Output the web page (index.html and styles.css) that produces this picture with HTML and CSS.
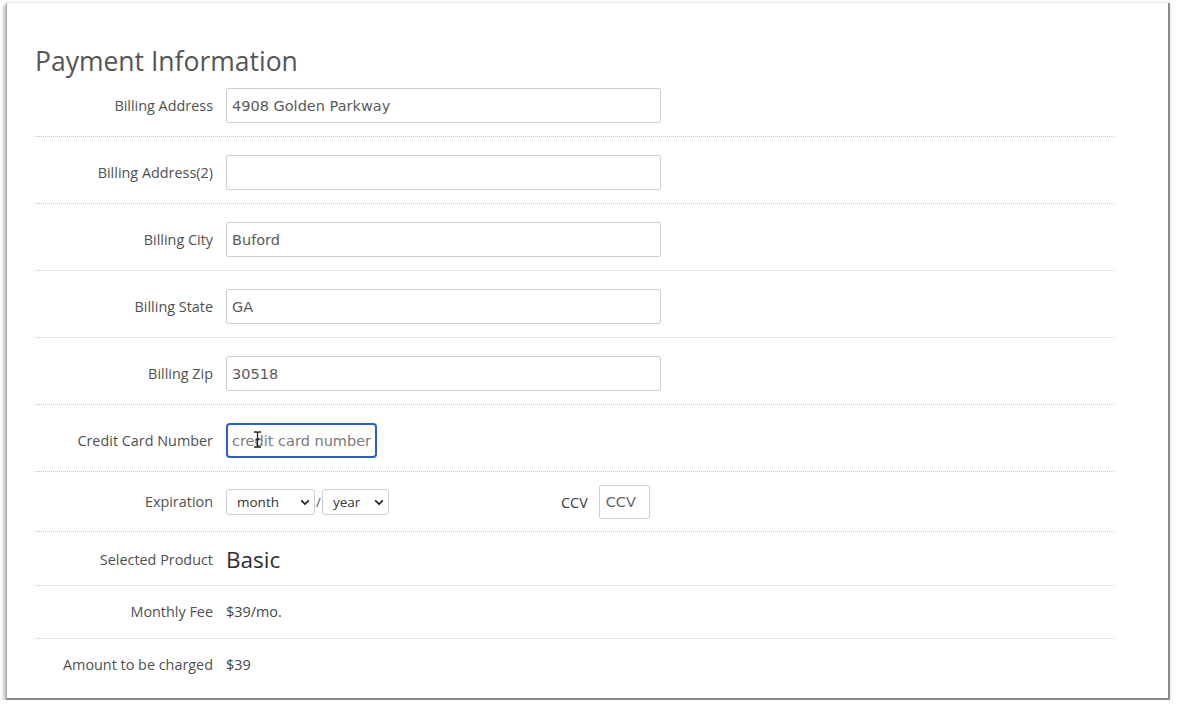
FILE: index.html
```html
<!DOCTYPE html>
<html lang="en">
<head>
<meta charset="utf-8">
<title>Payment Information</title>
<link rel="stylesheet" href="styles.css">
</head>
<body>
<div class="card">
  <h1 class="title">Payment Information</h1>
  <div class="form">
    <div class="row row-first">
      <label class="lbl">Billing Address</label>
      <div class="val"><input class="txt" type="text" value="4908 Golden Parkway"></div>
    </div>
    <div class="row">
      <label class="lbl">Billing Address(2)</label>
      <div class="val"><input class="txt" type="text" value=""></div>
    </div>
    <div class="row">
      <label class="lbl">Billing City</label>
      <div class="val"><input class="txt" type="text" value="Buford"></div>
    </div>
    <div class="row">
      <label class="lbl">Billing State</label>
      <div class="val"><input class="txt" type="text" value="GA"></div>
    </div>
    <div class="row">
      <label class="lbl">Billing Zip</label>
      <div class="val"><input class="txt" type="text" value="30518"></div>
    </div>
    <div class="row">
      <label class="lbl">Credit Card Number</label>
      <div class="val">
        <span class="cc-wrap">
          <input class="txt cc" type="text" placeholder="credit card number">
          <svg class="ibeam" width="9" height="17" viewBox="0 0 9 17" aria-hidden="true">
            <path d="M1 1h2.5c.6 0 1 .4 1 1M8 1H5.5c-.6 0-1 .4-1 1v13c0 .6-.4 1-1 1H1M8 16H5.5c-.6 0-1-.4-1-1M2.5 8.5h4" fill="none" stroke="#222" stroke-width="1.3"/>
          </svg>
        </span>
      </div>
    </div>
    <div class="row row-exp">
      <label class="lbl">Expiration</label>
      <div class="val exp">
        <span class="sel-wrap">
          <select class="sel sel-month"><option>month</option></select>
          <svg class="chev" width="10" height="7" viewBox="0 0 10 7" aria-hidden="true"><path d="M1.2 1.3L5 5.1l3.8-3.8" fill="none" stroke="#222" stroke-width="1.7"/></svg>
        </span>
        <span class="slash">/</span>
        <span class="sel-wrap">
          <select class="sel sel-year"><option>year</option></select>
          <svg class="chev" width="10" height="7" viewBox="0 0 10 7" aria-hidden="true"><path d="M1.2 1.3L5 5.1l3.8-3.8" fill="none" stroke="#222" stroke-width="1.7"/></svg>
        </span>
        <span class="ccv-lbl">CCV</span>
        <input class="txt ccv" type="text" placeholder="CCV">
      </div>
    </div>
    <div class="row row-product">
      <label class="lbl">Selected Product</label>
      <div class="val product">Basic</div>
    </div>
    <div class="row row-text">
      <label class="lbl">Monthly Fee</label>
      <div class="val plain">$39/mo.</div>
    </div>
    <div class="row row-text row-last">
      <label class="lbl">Amount to be charged</label>
      <div class="val plain">$39</div>
    </div>
  </div>
</div>
</body>
</html>
```

FILE: styles.css
```css
html, body {
  margin: 0;
  padding: 0;
  background: #ffffff;
}

body {
  font-family: "Open Sans", "Liberation Sans", sans-serif;
  color: #555;
  padding-top: 3px;
}

.card {
  box-sizing: border-box;
  margin-left: 6px;
  width: 1164px;
  height: 697px;
  background: #fff;
  border-left: 1px solid #a8a8a8;
  border-right: 2px solid #8a8a8a;
  border-bottom: 2px solid #8a8a8a;
  box-shadow: -2px 2px 4px rgba(0, 0, 0, 0.3), 0 -1px 3px rgba(0, 0, 0, 0.07);
  padding: 43px 54px 0 28px;
}

.title {
  margin: 0;
  font-family: "Open Sans", sans-serif;
  font-weight: 500;
  font-size: 26.5px;
  line-height: 30px;
  color: #555;
}

.form {
  display: flex;
  flex-direction: column;
}

.row {
  display: grid;
  grid-template-columns: 178px 1fr;
  column-gap: 13px;
  align-items: center;
  padding: 18px 0 13px;
  border-bottom: 1px dotted #c8c8c8;
}

.row-first {
  padding-top: 12px;
}

.row-exp {
  padding: 13px 0 12px;
}

.row-product {
  padding: 13px 0 10px;
}

.row-text {
  padding: 16px 0 16px;
}

.row-last {
  border-bottom: none;
}

.lbl {
  text-align: right;
  font-size: 14.4px;
  line-height: 20px;
  color: #505050;
}

.val {
  display: flex;
  align-items: center;
}

.txt {
  box-sizing: border-box;
  width: 435px;
  height: 35px;
  margin: 0;
  padding: 0 5px;
  border: 1px solid #cfcfcf;
  border-radius: 2px;
  font-family: "DejaVu Sans", Verdana, sans-serif;
  font-size: 14.5px;
  color: #5a5a5a;
  background: #fff;
  outline: none;
}

.txt::placeholder {
  color: #7a7a7a;
}

.cc-wrap {
  position: relative;
  display: inline-block;
}

.cc {
  width: 151px;
  height: 35px;
  border: 2px solid #2860c6;
  border-radius: 4px;
  padding: 0 4px;
}

.ibeam {
  position: absolute;
  left: 27px;
  top: 8px;
}

.exp {
  height: 34px;
}

.sel-wrap {
  position: relative;
  display: inline-flex;
}

.chev {
  position: absolute;
  right: 5px;
  top: 10px;
  pointer-events: none;
}

.sel {
  box-sizing: border-box;
  -webkit-appearance: none;
  appearance: none;
  height: 26px;
  margin: 0;
  border: 1px solid #cfcfcf;
  border-radius: 3px;
  background: #fff;
  font-family: "Open Sans", sans-serif;
  font-size: 13.5px;
  color: #333;
  padding: 0 4px 0 10px;
}

.sel-month {
  width: 89px;
}

.sel-year {
  width: 67px;
}

.slash {
  font-size: 13px;
  color: #555;
  width: 7px;
  text-align: center;
}

.ccv-lbl {
  margin-left: 172px;
  font-size: 14.4px;
  color: #3a3a3a;
}

.ccv {
  width: 51px;
  height: 34px;
  margin-left: 11px;
  padding: 0 6px;
}

.ccv::placeholder {
  color: #666;
}

.product {
  font-size: 22.5px;
  line-height: 30px;
  color: #2e2e2e;
}

.plain {
  font-size: 14.4px;
  line-height: 20px;
  color: #444;
}
```
